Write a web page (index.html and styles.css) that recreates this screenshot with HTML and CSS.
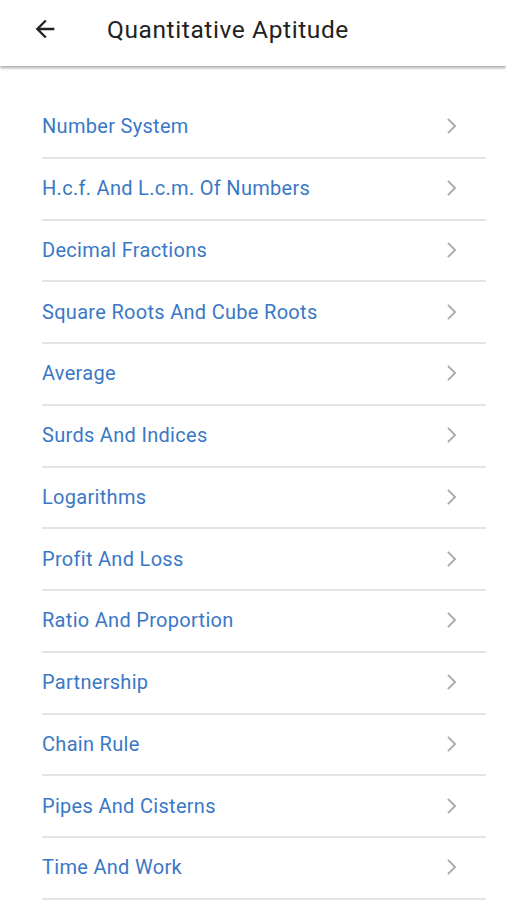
FILE: index.html
```html
<!DOCTYPE html>
<html lang="en">
<head>
  <meta charset="UTF-8" />
  <meta name="viewport" content="width=device-width, initial-scale=1.0"/>
  <title>Quantitative Aptitude</title>
  <link rel="stylesheet" href="styles.css">
</head>
<body>
  <header class="toolbar">
    <svg class="back" width="28" height="28" viewBox="0 0 24 24">
      <path d="M20 11H7.83l5.59-5.59L12 4l-8 8 8 8 1.41-1.41L7.83 13H20v-2z" fill="#222"/>
    </svg>
    <h1>Quantitative Aptitude</h1>
  </header>

  <ul class="topics">
    <li class="topic"><span>Number System</span><svg class="chev" viewBox="0 0 12 20"><path d="M2 2l8 8-8 8"/></svg></li>
    <li class="topic"><span>H.c.f. And L.c.m. Of Numbers</span><svg class="chev" viewBox="0 0 12 20"><path d="M2 2l8 8-8 8"/></svg></li>
    <li class="topic"><span>Decimal Fractions</span><svg class="chev" viewBox="0 0 12 20"><path d="M2 2l8 8-8 8"/></svg></li>
    <li class="topic"><span>Square Roots And Cube Roots</span><svg class="chev" viewBox="0 0 12 20"><path d="M2 2l8 8-8 8"/></svg></li>
    <li class="topic"><span>Average</span><svg class="chev" viewBox="0 0 12 20"><path d="M2 2l8 8-8 8"/></svg></li>
    <li class="topic"><span>Surds And Indices</span><svg class="chev" viewBox="0 0 12 20"><path d="M2 2l8 8-8 8"/></svg></li>
    <li class="topic"><span>Logarithms</span><svg class="chev" viewBox="0 0 12 20"><path d="M2 2l8 8-8 8"/></svg></li>
    <li class="topic"><span>Profit And Loss</span><svg class="chev" viewBox="0 0 12 20"><path d="M2 2l8 8-8 8"/></svg></li>
    <li class="topic"><span>Ratio And Proportion</span><svg class="chev" viewBox="0 0 12 20"><path d="M2 2l8 8-8 8"/></svg></li>
    <li class="topic"><span>Partnership</span><svg class="chev" viewBox="0 0 12 20"><path d="M2 2l8 8-8 8"/></svg></li>
    <li class="topic"><span>Chain Rule</span><svg class="chev" viewBox="0 0 12 20"><path d="M2 2l8 8-8 8"/></svg></li>
    <li class="topic"><span>Pipes And Cisterns</span><svg class="chev" viewBox="0 0 12 20"><path d="M2 2l8 8-8 8"/></svg></li>
    <li class="topic"><span>Time And Work</span><svg class="chev" viewBox="0 0 12 20"><path d="M2 2l8 8-8 8"/></svg></li>
  </ul>
</body>
</html>
```

FILE: styles.css
```css
:root {
  --link-blue: #3a78c6;
  --divider: #e3e3e3;
  --chevron: #a8a8a8;
}

body {
  margin: 0;
  background: #fff;
  font-family: Roboto, "Noto Sans", sans-serif;
  overflow: hidden;
}

.toolbar {
  height: 66px;
  display: flex;
  align-items: center;
  padding-left: 31px;
  background: #fff;
  box-shadow: 0 2px 3px rgba(0, 0, 0, 0.35);
  position: relative;
  z-index: 1;
}

.back {
  margin-top: -8px;
}

.toolbar h1 {
  margin: -8px 0 0 48px;
  font-size: 24.5px;
  font-weight: 400;
  color: #222;
  letter-spacing: 0.6px;
}

.topics {
  list-style: none;
  margin: 0;
  padding: 31px 20px 0 42px;
}

.topic {
  height: 61.75px;
  box-sizing: border-box;
  border-bottom: 2px solid var(--divider);
  display: flex;
  align-items: center;
  justify-content: space-between;
  padding-bottom: 1px;
  color: var(--link-blue);
  font-size: 20px;
  letter-spacing: 0.3px;
}

.chev {
  width: 11px;
  height: 18px;
  margin-right: 29px;
  fill: none;
  stroke: var(--chevron);
  stroke-width: 2;
}
```
